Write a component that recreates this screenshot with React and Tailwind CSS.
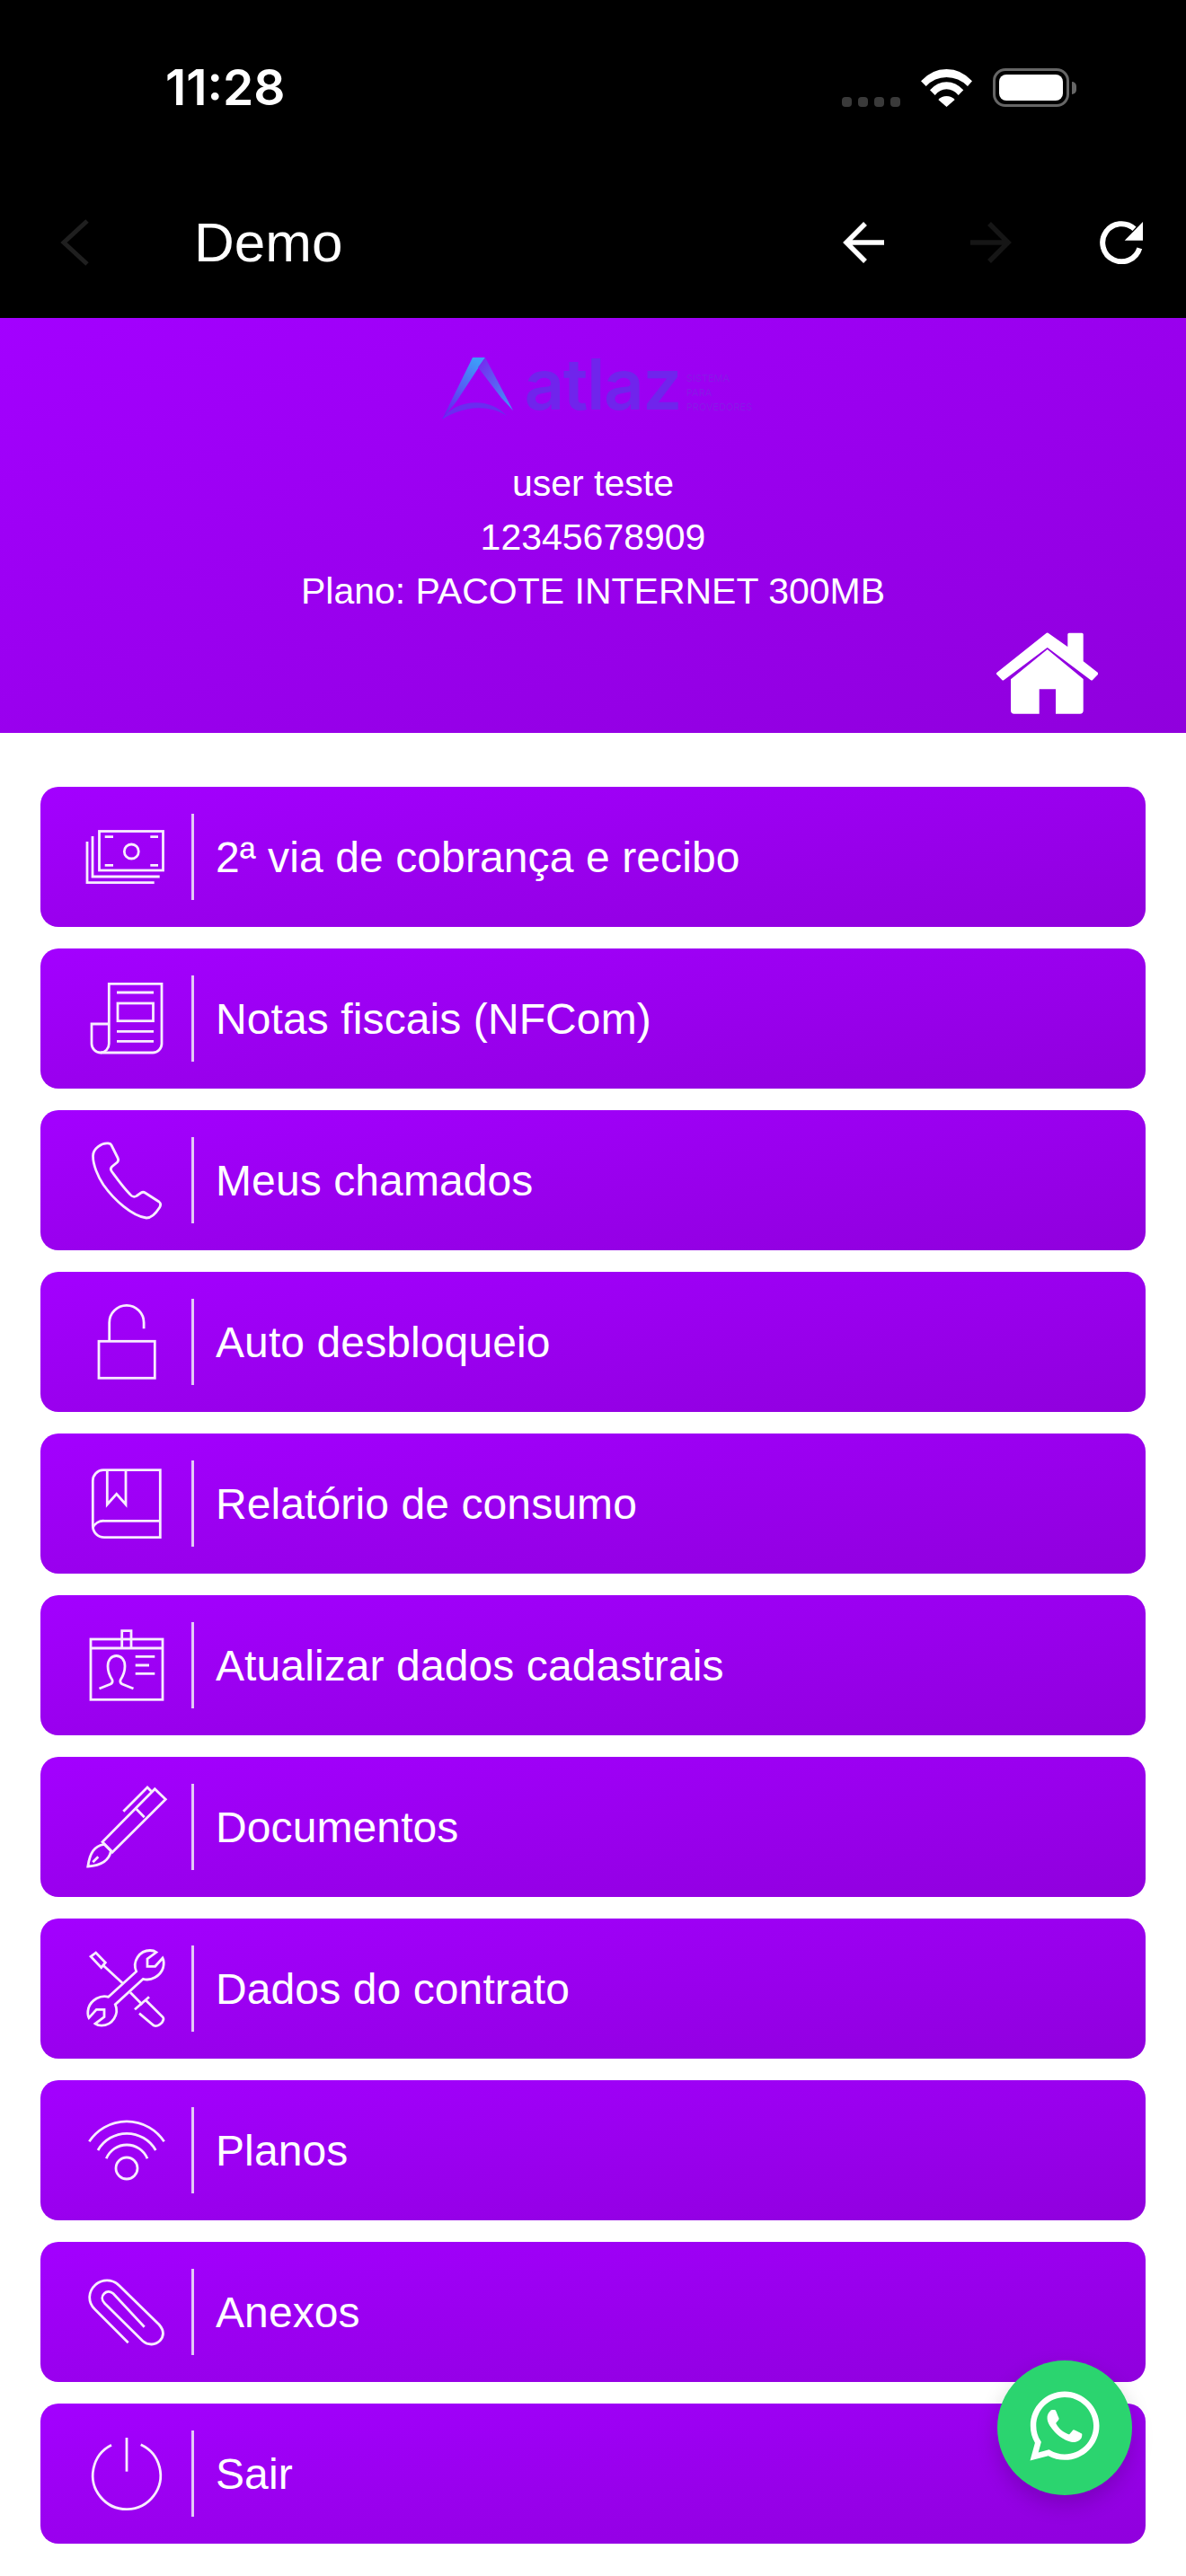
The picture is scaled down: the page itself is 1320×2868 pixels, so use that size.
import React from "react";
import { FaWhatsapp } from "react-icons/fa";

const Line = ({ children }) => (
	<svg
		width="120"
		height="120"
		viewBox="0 0 120 120"
		fill="none"
		stroke="#f8ecff"
		strokeWidth="2.8"
		className="shrink-0 overflow-visible"
	>
		{children}
	</svg>
);

const MoneyIcon = () => (
	<Line>
		<rect x="35.5" y="31.5" width="71" height="43.5" />
		<path d="M28 37V82H102.7M22 43V88.7H96.7" />
		<circle cx="71.3" cy="54" r="8" />
		<path d="M41.7 37.7H51M92.3 37.7H101M41.7 69.3H51M92.3 69.3H101" />
	</Line>
);

const NewsIcon = () => (
	<Line>
		<path d="M46.3 88V21.3H105V88a10 10 0 0 1-10 10H37a10 10 0 0 1-10-10V66H46.3" />
		<path d="M46.3 88a10 10 0 0 1-9.3 10" />
		<path d="M55 31H96M55 74.3H96M55 85.3H96" />
		<rect x="56" y="43" width="39.5" height="19.7" />
	</Line>
);

const PhoneIcon = () => (
	<Line>
		<path d="M46 19C48 19 48.5 20 49 21L56 35C57 37 57 38.5 55.5 40L49.5 45C48 46.5 48 48.5 49.5 50.5C55 58 62 68 70 76C72 78.5 75 79 77 77.5L82 74C83.5 73 85 73 86.5 74L102 84C104 85.5 104 88 102.5 90.5C99 96 94 102 88 102C72 100 52 82 40 65C34 56 28.5 43 28.5 33C28.5 25 38 18 46 19Z" />
	</Line>
);

const LockIcon = () => (
	<Line>
		<rect x="35" y="59.3" width="62.3" height="41" />
		<path d="M46.7 59V38.5a19.2 19.2 0 0 1 38.4 0V45.3" />
	</Line>
);

const BookIcon = () => (
	<Line>
		<path d="M103.3 22.7H40a12 12 0 0 0-11.7 12V85A12.7 12.7 0 0 0 41 97.7H103.3Z" />
		<path d="M103.3 79.3H41A12.7 12.7 0 0 0 28.3 87" />
		<path d="M44.3 22.7V61L54.7 49.3L65 61V22.7" />
	</Line>
);

const BadgeIcon = () => (
	<Line>
		<rect x="26" y="31" width="80" height="67.3" />
		<path d="M26 41H106" />
		<path d="M60.7 41V21.7H71V41" />
		<path d="M35.5 86L48 81C50 80 50.5 78.5 50 76.5C47 72 45 67 45 61C45 54 49 49.5 54.5 49.5C60 49.5 64 54 64 61C64 67 62 72 59 76.5C58.5 78.5 59 80 61 81L73.5 86" />
		<path d="M75.7 50.3H97.3M75.7 60H91M75.7 69.3H97.3" />
	</Line>
);

const BrushIcon = () => (
	<Line>
		<path d="M39 76.7L50 88.3L109.3 29.3L97.3 17.7Z" />
		<path d="M62.3 42.7L89 16L93.3 20.3" />
		<path d="M76.7 40L85.7 49.3" />
		<path d="M41 79.3C30 81 25 89 22.8 104C38 103 46.5 98 48.5 86.5Z" />
		<path d="M28.3 99.3L34.3 93.3" />
	</Line>
);

const ToolsIcon = () => (
	<Line>
		<path d="M26 24.3L31.7 20L42.3 31L37.7 36.7Z" />
		<path d="M40 34.3L61.7 54.3M70 64.3L83.3 77.7" />
		<path d="M75 83.3L91 69.3" />
		<path d="M80 87.7L96 101C100 103 106 99 107 94C107 92.5 106.7 92.7 106 91.5L87 72.7" />
		<path d="M76.7 41C72 30 80 17.5 92 17.5C94.5 17.5 97 18 99 19.5L89 27V35.3H97.7L106 26C107.5 29 107.5 33 106.5 37C103.5 46 93 52 84.3 49.3L53.3 77.6C58 88.6 50 101.1 38 101.1C35.5 101.1 33 100.6 31 99.1L41 91.6V83.3H32.3L24 92.6C22.5 89.6 22.5 85.6 23.5 81.6C26.5 72.6 37 66.6 45.7 69.3Z" />
	</Line>
);

const WifiIcon = () => (
	<Line>
		<circle cx="66" cy="80" r="12" />
		<path d="M24.3 50.3A50 50 0 0 1 107.7 50.3" />
		<path d="M34 60A37 37 0 0 1 98.3 60" />
		<path d="M43.3 69.3A24.7 24.7 0 0 1 89 69.3" />
	</Line>
);

const ClipIcon = () => (
	<Line>
		<path d="M67.7 94.3L30.5 57C22 48.5 23.5 37 31 30C38.5 23 50 23 57.5 30.5L102 74C108 81 107.5 87 103 92C98 97 90 97.5 84 92.5L41.5 50.5C38 47 38 42.5 41 39.5C44 36.5 48 37 51 39.5L85.7 76.7" />
	</Line>
);

const PowerIcon = () => (
	<Line>
		<path d="M49 28.3A37.7 37.7 0 1 0 81.7 27.7" />
		<path d="M66 20V57.7" />
	</Line>
);

const menu = [
	{ label: "2ª via de cobrança e recibo", Icon: MoneyIcon },
	{ label: "Notas fiscais (NFCom)", Icon: NewsIcon },
	{ label: "Meus chamados", Icon: PhoneIcon },
	{ label: "Auto desbloqueio", Icon: LockIcon },
	{ label: "Relatório de consumo", Icon: BookIcon },
	{ label: "Atualizar dados cadastrais", Icon: BadgeIcon },
	{ label: "Documentos", Icon: BrushIcon },
	{ label: "Dados do contrato", Icon: ToolsIcon },
	{ label: "Planos", Icon: WifiIcon },
	{ label: "Anexos", Icon: ClipIcon },
	{ label: "Sair", Icon: PowerIcon },
];

const MenuButton = ({ label, Icon }) => (
	<button className="flex h-[156px] w-full items-center rounded-[20px] bg-linear-to-br from-[#a300ff] to-[#9000dd] pl-[30px] text-left">
		<Icon />
		<span className="ml-[18px] h-[96px] w-[3px] shrink-0 bg-[#e3c9f5]" />
		<span className="ml-[24px] pt-[2px] text-[48px] leading-none tracking-[0.1px] text-white">{label}</span>
	</button>
);

const StatusBar = () => (
	<div className="flex h-[195px] items-center justify-between pl-[184px] pr-[122px]">
		<span className="font-['Inter',sans-serif] text-[55px] font-semibold leading-none text-white">
			11:28
		</span>
		<div className="flex items-center">
			<div className="mt-[31px] flex gap-[7px]">
				<span className="h-[11px] w-[11px] rounded-[4px] bg-[#3a3a3a]" />
				<span className="h-[11px] w-[11px] rounded-[4px] bg-[#3a3a3a]" />
				<span className="h-[11px] w-[11px] rounded-[4px] bg-[#3a3a3a]" />
				<span className="h-[11px] w-[11px] rounded-[4px] bg-[#3a3a3a]" />
			</div>
			<svg width="57" height="42" viewBox="0 0 57 42" fill="white" className="ml-[23px]">
				<path d="M0 13.3Q12 0 28.5 0Q45 0 57 13.3L52 19Q42 9 28.5 9Q15 9 5.7 19Z" />
				<path d="M10 23.3Q18 14.3 28.5 14.3Q39 14.3 47.3 23.3L41.7 29Q36 22.3 28.5 22.3Q21 22.3 15.7 29Z" />
				<path d="M19.3 34Q23 30 28.5 30Q34 30 37.7 34L28.5 42Z" />
			</svg>
			<div className="ml-[23px] flex items-center">
				<div className="h-[43px] w-[85px] rounded-[14px] border-[3px] border-[#666] p-[4px]">
					<div className="h-full w-full rounded-[8px] bg-white" />
				</div>
				<span className="ml-[3px] h-[14px] w-[5px] rounded-r-full bg-[#666]" />
			</div>
		</div>
	</div>
);

const NavBar = () => (
	<div className="flex h-[159px] items-center justify-between pb-[9px] pl-[67px] pr-[48px]">
		<div className="flex items-center">
			<svg width="33" height="54" viewBox="0 0 33 54" fill="none" stroke="#1f1f1f" strokeWidth="5">
				<path d="M30 3L4 27L30 51" />
			</svg>
			<span className="ml-[116px] text-[62px] leading-none text-white">Demo</span>
		</div>
		<div className="flex items-center">
			<svg width="47" height="46" viewBox="0 0 47 46" fill="none" stroke="white" strokeWidth="5.5">
				<path d="M47 23H6M26 2L5 23L26 44" />
			</svg>
			<svg width="47" height="46" viewBox="0 0 47 46" fill="none" stroke="#161616" strokeWidth="5.5" className="ml-[96px]">
				<path d="M0 23H41M21 2L42 23L21 44" />
			</svg>
			<svg width="48" height="48" viewBox="0 0 48 48" className="ml-[97px]">
				<path d="M44.3 30.3A21 21 0 1 1 38.5 8.8" fill="none" stroke="white" strokeWidth="6" />
				<path d="M27.7 21.7H48V1Z" fill="white" />
			</svg>
		</div>
	</div>
);

// marca da atlaz, quase sumindo no fundo roxo
const Logo = () => (
	<div className="flex h-[70px] w-[337px] items-start whitespace-nowrap">
		<svg width="80" height="70" viewBox="0 0 80 70" className="shrink-0">
			<defs>
				<linearGradient id="logoLeft" x1="0.7" y1="0" x2="0.2" y2="1">
					<stop offset="0" stopColor="#3e9cf8" />
					<stop offset="1" stopColor="#6b1ff0" />
				</linearGradient>
				<linearGradient id="logoRight" x1="0" y1="0" x2="1" y2="1">
					<stop offset="0" stopColor="#7a22ee" />
					<stop offset="1" stopColor="#3e9cf8" />
				</linearGradient>
			</defs>
			<path d="M34 1H48L16 50L0 70Z" fill="url(#logoLeft)" />
			<path d="M48 1L79 60L66 46L40 12Z" fill="url(#logoRight)" />
			<path d="M0 70C12 50 50 42 72 66C50 52 22 56 0 70Z" fill="#6a2cf0" />
		</svg>
		<span className="ml-[12px] mt-[-8px] font-['Inter',sans-serif] text-[78px] font-semibold leading-[78px] tracking-[-1.5px] text-[#7024ec]">
			atlaz
		</span>
		<span className="ml-[6px] mt-[16px] flex flex-col font-['Inter',sans-serif] text-[11px] leading-[16px] text-[#8a18e8]">
			<span>SISTEMA</span>
			<span>PARA</span>
			<span>PROVEDORES</span>
		</span>
	</div>
);

const Header = () => (
	<div className="flex h-[462px] flex-col items-center bg-linear-to-br from-[#a300ff] to-[#9000dd] pt-[43px]">
		<Logo />
		<div className="mt-[41px] text-center text-[41px] leading-[60px] text-white">
			<div>user teste</div>
			<div>12345678909</div>
			<div>Plano: PACOTE INTERNET 300MB</div>
		</div>
		<div className="mt-[16px] flex w-full justify-end pr-[98px]">
			<svg width="113" height="91" viewBox="0 0 113 91" fill="white">
				<path
					d="M56.7 2L80.8 19V2.2H95.2V33L111.8 46L106 52L56.7 15L7.3 52L1.5 46Z"
					stroke="white"
					strokeWidth="3"
					strokeLinejoin="round"
				/>
				<path d="M56.7 19L96.7 52V87a3.7 3.7 0 0 1-3.7 3.7H66V63.3H47.7V90.7H19.7a3.7 3.7 0 0 1-3.7-3.7V52.3Z" />
			</svg>
		</div>
	</div>
);

const App = () => {
	return (
		<div className="relative h-[2868px] overflow-hidden bg-white font-['Liberation_Sans',Arial,sans-serif]">
			<div className="bg-black">
				<StatusBar />
				<NavBar />
			</div>
			<Header />
			<div className="flex flex-col gap-[24px] px-[45px] pt-[60px]">
				{menu.map((item) => (
					<MenuButton key={item.label} label={item.label} Icon={item.Icon} />
				))}
			</div>
			<button className="absolute bottom-[90px] right-[60px] flex h-[150px] w-[150px] items-center justify-center rounded-full bg-[#2bd46f] pb-[4px] shadow-[0_10px_24px_rgba(0,0,0,0.18)]">
				<FaWhatsapp color="white" size={88} />
			</button>
		</div>
	);
};

export default App;
